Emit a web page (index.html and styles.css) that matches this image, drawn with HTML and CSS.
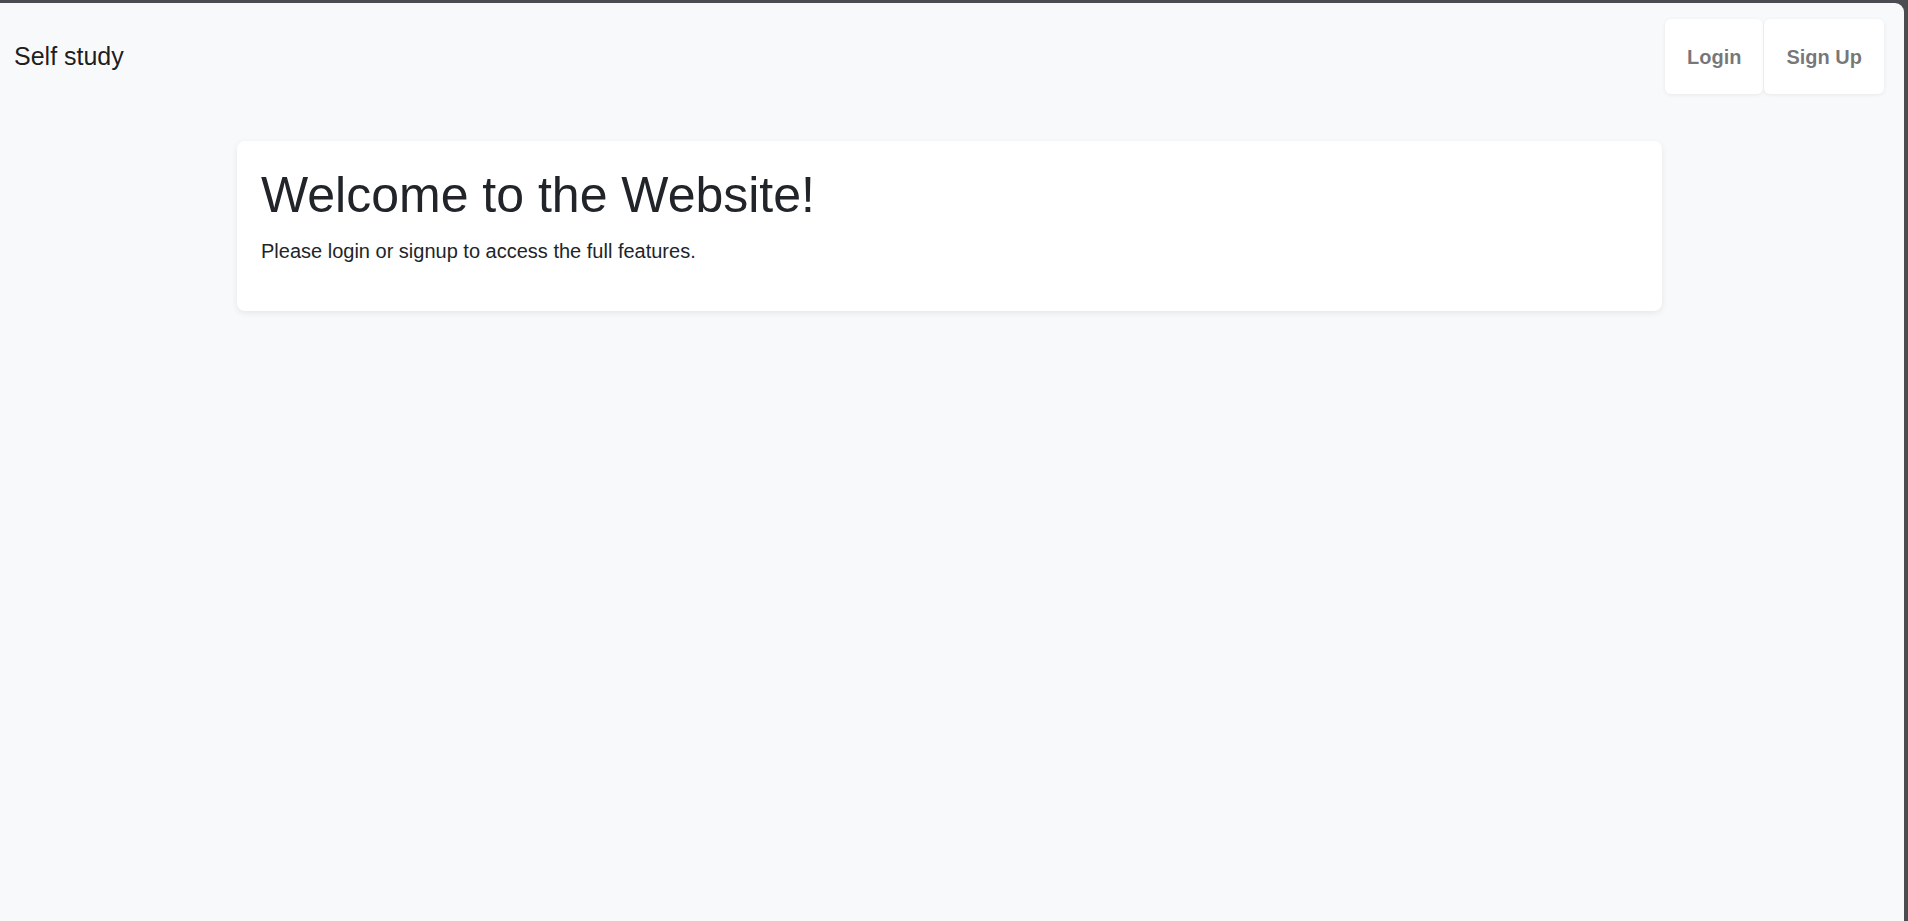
FILE: index.html
```html
<!DOCTYPE html>
<html lang="en">
<head>
<meta charset="utf-8">
<title>Self study</title>
<link rel="stylesheet" href="styles.css">
</head>
<body>
<div class="window">
  <nav class="navbar">
    <a class="brand" href="#">Self study</a>
    <div class="nav-actions">
      <a class="nav-btn" href="#">Login</a>
      <a class="nav-btn" href="#">Sign Up</a>
    </div>
  </nav>
  <main class="content">
    <section class="card">
      <h1 class="card-title">Welcome to the Website!</h1>
      <p class="card-text">Please login or signup to access the full features.</p>
    </section>
  </main>
</div>
</body>
</html>
```

FILE: styles.css
```css
html, body {
  margin: 0;
  padding: 0;
  height: 100%;
}
body {
  background: #4b4c51;
  font-family: "Liberation Sans", Arial, sans-serif;
  overflow: hidden;
}
.window {
  margin-top: 3px;
  margin-right: 4px;
  height: 918px;
  background: #f8f9fa;
  border-top-right-radius: 9px;
  box-sizing: border-box;
}
.navbar {
  display: flex;
  justify-content: space-between;
  align-items: center;
  padding: 16px 20px 0 14px;
}
.brand {
  font-size: 25px;
  line-height: 37.5px;
  color: rgba(0, 0, 0, 0.9);
  text-decoration: none;
}
.nav-actions {
  display: flex;
}
.nav-btn {
  display: flex;
  align-items: center;
  height: 75px;
  padding: 1px 22px 0;
  box-sizing: border-box;
  background: #fff;
  border-radius: 6px;
  box-shadow: 0 1px 4px rgba(0, 0, 0, 0.07);
  font-size: 20px;
  font-weight: bold;
  color: rgba(0, 0, 0, 0.55);
  text-decoration: none;
}
.nav-btn + .nav-btn {
  margin-left: 1px;
}
.content {
  padding-top: 47px;
  padding-left: 237px;
}
.card {
  width: 1425px;
  box-sizing: border-box;
  background: #fff;
  border-radius: 8px;
  box-shadow: 0 2px 6px rgba(0, 0, 0, 0.08);
  padding: 24px 24px 25px;
  color: #212529;
}
.card-title {
  margin: 0 0 11px;
  font-size: 50px;
  font-weight: 400;
  line-height: 1.2;
}
.card-text {
  margin: 0 0 20px;
  font-size: 20px;
  line-height: 30px;
}
```
